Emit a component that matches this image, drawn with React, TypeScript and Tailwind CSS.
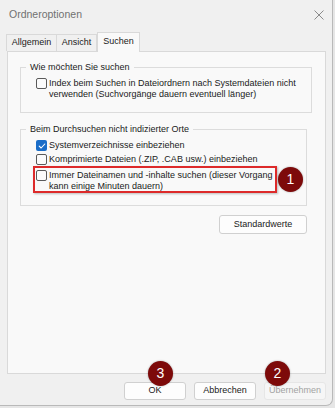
import React from "react";

const font = { fontFamily: '"Liberation Sans", Arial, sans-serif' };

function Box({ checked }: { checked?: boolean }) {
  if (checked) {
    return (
      <span className="flex h-[11px] w-[11px] shrink-0 items-center justify-center rounded-[2px] bg-[#1a6dc8]">
        <svg width="8" height="8" viewBox="0 0 8 8" fill="none">
          <path d="M1.2 4.2 L3.1 6 L6.8 2" stroke="white" strokeWidth="1.1" strokeLinecap="round" strokeLinejoin="round" />
        </svg>
      </span>
    );
  }
  return <span className="block h-[11px] w-[11px] shrink-0 rounded-[2px] border border-[#5a5a5a] bg-[#fbfbfb]" />;
}

function Check({ checked, children }: { checked?: boolean; children: React.ReactNode }) {
  return (
    <div className="flex items-start gap-[2px]">
      <Box checked={checked} />
      <span className="whitespace-nowrap leading-[11px] text-[#1a1a1a]">{children}</span>
    </div>
  );
}

function Badge({ n, className }: { n: string; className: string }) {
  return (
    <div
      className={
        "absolute flex h-[25px] w-[25px] items-center justify-center rounded-full bg-[#7d0a0a] text-[14px] text-white shadow-[0_0_2px_rgba(0,0,0,0.35)] " +
        className
      }
    >
      {n}
    </div>
  );
}

export default function App() {
  return (
    <div className="h-[408px] w-[335px] bg-[#e6e6e6]" style={font}>
      <div className="relative flex h-[406px] w-[333px] flex-col rounded-br-[7px] border-r border-b border-[#b9b9b9] bg-[#f0f0f0] text-[9px]">
        {/* Title bar */}
        <div className="flex h-[30px] items-center justify-between pl-[9px] pr-[9px]">
          <span className="text-[10.5px] text-[#707070]">Ordneroptionen</span>
          <svg width="10" height="10" viewBox="0 0 10 10" className="mr-[-1px]">
            <path d="M0.5 0.5 L9.5 9.5 M9.5 0.5 L0.5 9.5" stroke="#8a8a8a" strokeWidth="1" />
          </svg>
        </div>

        {/* Tabs */}
        <div className="ml-[6px] mt-[2px] flex h-[19px] items-end">
          <div className="flex h-[17px] w-[51px] items-center justify-center border border-b-0 border-[#d9d9d9] bg-[#f0f0f0] text-[#1a1a1a]">
            Allgemein
          </div>
          <div className="flex h-[17px] w-[40px] items-center justify-center border border-b-0 border-l-0 border-[#d9d9d9] bg-[#f0f0f0] text-[#1a1a1a]">
            Ansicht
          </div>
          <div className="relative z-10 mb-[-1px] flex h-[20px] w-[43px] items-center justify-center border border-b-0 border-[#d9d9d9] bg-[#f9f9f9] pb-[1px] text-[#1a1a1a]">
            Suchen
          </div>
        </div>

        {/* Panel */}
        <div className="ml-[7px] flex h-[323px] w-[319px] flex-col border border-[#d9d9d9] bg-[#f9f9f9] px-[12px] pt-[9px]">
          <fieldset className="w-[287px] border border-[#dcdcdc] px-[15px] pb-[12px] pt-[5px]">
            <legend className="ml-[-10px] px-[4px] leading-[12px] text-[#1a1a1a]">Wie möchten Sie suchen</legend>
            <Check>
              Index beim Suchen in Dateiordnern nach Systemdateien nicht
              <br />
              verwenden (Suchvorgänge dauern eventuell länger)
            </Check>
          </fieldset>

          <fieldset className="mt-[10px] w-[287px] border border-[#dcdcdc] px-[15px] pb-[13px] pt-[5px]">
            <legend className="ml-[-10px] px-[4px] leading-[12px] text-[#1a1a1a]">Beim Durchsuchen nicht indizierter Orte</legend>
            <div className="flex flex-col gap-[3px]">
              <Check checked>Systemverzeichnisse einbeziehen</Check>
              <Check>Komprimierte Dateien (.ZIP, .CAB usw.) einbeziehen</Check>
              <div className="relative mt-[2px]">
                <Check>
                  Immer Dateinamen und -inhalte suchen (dieser Vorgang
                  <br />
                  kann einige Minuten dauern)
                </Check>
                <div className="pointer-events-none absolute left-[-3px] top-[-4px] h-[27px] w-[244px] border-2 border-[#dd2a2a] shadow-[1px_1px_2px_rgba(0,0,0,0.25)]" />
              </div>
            </div>
          </fieldset>

          <div className="mt-[9px] flex w-[287px] justify-end">
            <div className="flex h-[19px] w-[88px] items-center justify-center rounded-[3px] border border-[#d0d0d0] bg-[#fdfdfd] text-[#1a1a1a]">
              Standardwerte
            </div>
          </div>
        </div>

        {/* Buttons */}
        <div className="mt-[8px] flex w-[326px] justify-end gap-[8px]">
          <div className="flex h-[18px] w-[62px] items-center justify-center rounded-[3px] border border-[#d0d0d0] bg-[#fdfdfd] text-[#1a1a1a]">
            OK
          </div>
          <div className="flex h-[18px] w-[62px] items-center justify-center rounded-[3px] border border-[#d0d0d0] bg-[#fdfdfd] text-[#1a1a1a]">
            Abbrechen
          </div>
          <div className="flex h-[18px] w-[62px] items-center justify-center rounded-[3px] border border-[#e6e6e6] bg-[#f6f6f6] text-[#a3a3a3]">
            Übernehmen
          </div>
        </div>

        <Badge n="1" className="left-[278px] top-[167px]" />
        <Badge n="3" className="left-[148px] top-[361px]" />
        <Badge n="2" className="left-[265px] top-[361px]" />
      </div>
    </div>
  );
}
